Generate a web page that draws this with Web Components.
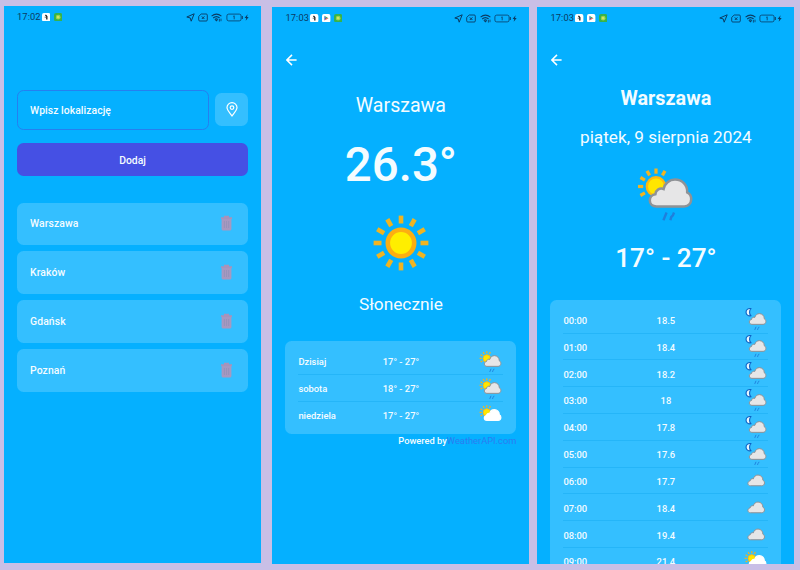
<!DOCTYPE html>
<html lang="pl">
<head>
<meta charset="utf-8">
<title>Pogoda</title>
<style>
html,body{margin:0;height:100%}
body{width:800px;height:570px;overflow:hidden;background:#c9bfe6;font-family:Roboto,"Liberation Sans",sans-serif;color:#f4fcff}
</style>
</head>
<body>
<weather-showcase></weather-showcase>
<script>
const define = (name, html) => customElements.define(name, class extends HTMLElement {
  constructor() { super(); this.attachShadow({ mode: "open" }); }
  connectedCallback() {
    this.shadowRoot.innerHTML = typeof html === "function" ? html(this) : html;
  }
});

/* Weather glyphs, drawn on a 64 unit square */
const CLOUD = "M22.5 43.4C18.5 43.4 15.8 41 15.8 37.6C15.8 34.2 18.2 31.6 21.4 31.2C21.6 27.4 25.4 24.6 29.6 26C30.6 20.4 35.4 16.6 41 16.6C48 16.6 53.6 22 53.2 29.4C56 30.8 57.3 33.4 57.2 36.4C57 40.6 54.4 43.4 50.2 43.4Z";
const rays = (cx, cy, r1, r2, w, angles) => angles.map(a => {
  const t = a * Math.PI / 180, c = Math.cos(t), s = Math.sin(t);
  return `<path d="M${cx + r1 * c} ${cy + r1 * s}L${cx + r2 * c} ${cy + r2 * s}" stroke="#f0b422" stroke-width="${w}"/>`;
}).join("");
const smallSun = rays(22, 23.5, 12.8, 18, 3.2, [150, 180, 210, 240, 270, 300]) +
  `<circle cx="22" cy="23.5" r="9.2" fill="#ffe600" stroke="#fcb813" stroke-width="2.4"/>`;
const greyCloud = `<path d="${CLOUD}" fill="#e6e6e7" stroke="#8f9296" stroke-width="2.5"/>`;
const drops = `<path d="M32.6 49.5L29.4 57.3M40 49.5L38.9 52.4L37.2 54.2L36.4 57.3" fill="none" stroke="#1f7fdc" stroke-width="2.4"/>`;
const moon = `<path d="M20 4C12 2.6 7.4 7.6 7.6 13C7.8 19 13 23.4 20 22C15.2 18 15.2 8 20 4Z" fill="#e8f7ff" stroke="#0c62c4" stroke-width="2.8" stroke-linejoin="round"/>`;
const GLYPHS = {
  sun: rays(32, 32, 19.5, 27.4, 4.6, [...Array(12)].map((_, i) => i * 30)) +
    `<circle cx="32" cy="32" r="13.2" fill="#ffee00" stroke="#fcae12" stroke-width="4.6"/>`,
  "sun-rain": smallSun + greyCloud + drops,
  "sun-cloud": smallSun + `<path d="${CLOUD}" fill="#fff" stroke="#fff" stroke-width="3"/>`,
  "moon-rain": moon + greyCloud + drops,
  cloud: `<g transform="translate(-3.5 1)">${greyCloud}</g>`
};
define("weather-icon", el => `<style>:host{display:block;width:var(--size,25.6px);height:var(--size,25.6px)}svg{display:block;width:100%;height:100%}</style>
<svg viewBox="0 0 64 64">${GLYPHS[el.getAttribute("kind")]}</svg>`);

define("status-bar", el => `<style>
:host{display:flex;align-items:center;height:22px;padding:0 12.4px 0 13px;color:#0b3b63;font-size:9.3px;letter-spacing:.1px;line-height:22px}
.apps{display:flex;gap:3.4px;margin-left:1.4px;flex:1}
svg{display:block}
.right{display:flex;align-items:center;gap:3.3px}
</style>
<span>${el.getAttribute("time")}</span>
<div class="apps">
<svg width="8.4" height="8.4" viewBox="0 0 8 8"><rect width="8" height="8" rx="1.8" fill="#fff"/><path d="M3.3 1.8L4.6 3.3V6.3" fill="none" stroke="#111" stroke-width="1.2"/><path d="M2.5 4H4" stroke="#777" stroke-width="1"/></svg>
${el.hasAttribute("store") ? `<svg width="8.4" height="8.4" viewBox="0 0 8 8"><rect width="8" height="8" rx="1.8" fill="#fff"/><path d="M2.3 1.7V6.3L4 4Z" fill="#3355b8"/><path d="M2.3 1.7L6.2 4H4Z" fill="#33a852"/><path d="M2.3 6.3L6.2 4H4Z" fill="#e8453c"/></svg>` : ""}
<svg width="8.4" height="8.4" viewBox="0 0 8 8"><rect width="8" height="8" rx="2" fill="#37b34a"/><circle cx="4" cy="4" r="1.8" fill="#c9e56a" stroke="#9bd24a"/></svg>
</div>
<div class="right">
<svg width="9" height="9" viewBox="0 0 9 9" fill="none" stroke="currentColor" stroke-linejoin="round"><path d="M.8 4L8.2 .8L5.2 8.2L4.2 4.9Z"/></svg>
<svg width="10" height="9" viewBox="0 0 10 9" fill="none" stroke="currentColor"><path d="M3.2 1H8.2Q9.3 1 9.3 2.1V6.9Q9.3 8 8.2 8H1.8Q.7 8 .7 6.9V3.4Z" stroke-width=".9"/><path d="M3.8 3.4L6.4 6M6.4 3.4L3.8 6"/></svg>
<svg width="11" height="9" viewBox="0 0 11 9" fill="none" stroke="currentColor" stroke-width="1.1"><path d="M.6 3.2Q5.4 -1 10.4 3.2M2.2 5Q5.4 2.2 8.6 5M3.8 6.6Q5.4 5.2 6.8 6.6"/><path d="M5.4 8.6L4 6.9H6.8Z" fill="currentColor" stroke="none"/><path d="M8.4 6V8.6M10 5.6V8.2" stroke-width=".8"/></svg>
<svg width="23" height="9" viewBox="0 0 23 9"><rect x=".9" y="1.1" width="14.2" height="6.8" rx="1.8" fill="none" stroke="currentColor" stroke-width=".8"/><path d="M16.3 3V6" stroke="currentColor"/><path d="M7.3 3.4L8.2 2.8V6.3" fill="none" stroke="currentColor" stroke-width=".8"/><path d="M21.6 1.3L18.6 5H20.2L19.7 7.7L22.7 4H21Z" fill="currentColor"/></svg>
</div>`);

define("phone-screen", el => `<style>
:host{display:flex;flex-direction:column;width:257px;height:557px;overflow:hidden;background:#05b0ff;box-sizing:border-box}
.body{padding:0 13px;display:flex;flex-direction:column;align-items:stretch}
</style>
<status-bar time="${el.getAttribute("time")}" ${el.hasAttribute("store") ? "store" : ""}></status-bar>
<div class="body"><slot></slot></div>`);

define("back-button", `<style>:host{display:flex;height:14px;margin:24px 0 0 .4px}svg{display:block}</style>
<svg width="12" height="14" viewBox="0 0 12 14" fill="none" stroke="#fff" stroke-width="1.5"><path d="M10.6 7H1.2M6 1.9L.9 7L6 12.1"/></svg>`);

define("location-form", `<style>
:host{display:grid;grid-template-columns:192px 33px;justify-content:space-between;align-items:center;row-gap:13px;margin-top:62px;font-size:10.4px;font-weight:500}
.field{box-sizing:border-box;height:39.5px;border:1px solid #257ff0;border-radius:6.5px;padding:0 12px;line-height:39.6px;letter-spacing:.05px}
.pin{height:33px;border-radius:6.5px;background:#34bfff;display:grid;place-items:center}
.add{grid-column:1/3;height:33.5px;line-height:35px;border-radius:6.5px;background:#4550e4;text-align:center}
</style>
<div class="field">Wpisz lokalizację</div>
<div class="pin"><svg width="12" height="15" viewBox="0 0 12 15" fill="none" stroke="#fff" stroke-width="1.2"><path d="M6 14C4.2 11.4 1 8.3 1 5.6A5 4.9 0 0 1 11 5.6C11 8.3 7.8 11.4 6 14Z"/><circle cx="6" cy="5.6" r="1.8"/></svg></div>
<div class="add">Dodaj</div>`);

define("city-row", `<style>
:host{display:flex;align-items:center;justify-content:space-between;height:42.5px;padding:0 14.8px 0 13px;border-radius:6.5px;background:#34bfff;font-size:10.4px;font-weight:500;letter-spacing:.1px}
span{padding-bottom:.6px}
svg{margin-bottom:.8px}
</style>
<span><slot></slot></span>
<svg width="13" height="16" viewBox="0 0 13 16"><path d="M1 2.2H12V4H1ZM4 .7H9V2.4H4Z" fill="#a793bb"/><path d="M1.6 4H11.4V14Q11.4 15.6 9.8 15.6H3.2Q1.6 15.6 1.6 14Z" fill="#a798c0"/><path d="M4.4 6V13M6.5 6V13M8.6 6V13" stroke="#8f90b8" stroke-width=".7"/></svg>`);

define("city-list", `<style>:host{display:flex;flex-direction:column;gap:6.4px;margin-top:26.5px}</style><slot></slot>`);

define("text-line", `<style>:host{display:block;text-align:center;white-space:nowrap}</style><slot></slot>`);

define("forecast-card", `<style>:host{display:block;background:#34bfff;border-radius:6.5px;padding:var(--top,7.6px) 13px 5px}</style><slot></slot>`);

define("forecast-row", el => `<style>
:host{display:grid;grid-template-columns:1fr auto 1fr;align-items:center;height:26.83px;box-sizing:border-box;border-bottom:1px solid #25b5f8;font-size:9.4px;font-weight:500;line-height:26px}
:host(:last-child){border-color:transparent}
span{padding-top:1.2px}
weather-icon{justify-self:end}
</style>
<span>${el.getAttribute("label")}</span><span>${el.getAttribute("value")}</span><weather-icon kind="${el.getAttribute("kind")}"></weather-icon>`);

define("api-credit", `<style>:host{display:flex;justify-content:flex-end;font-size:9.3px;font-weight:500;line-height:14px}a{color:#2b7cf2;font-weight:400}</style><span>Powered by</span><a>WeatherAPI.com</a>`);

const cities = ["Warszawa", "Kraków", "Gdańsk", "Poznań"];
const days = [["Dzisiaj", "17° - 27°", "sun-rain"], ["sobota", "18° - 27°", "sun-rain"], ["niedziela", "17° - 27°", "sun-cloud"]];
const hours = [["00:00", "18.5", "moon-rain"], ["01:00", "18.4", "moon-rain"], ["02:00", "18.2", "moon-rain"], ["03:00", "18", "moon-rain"], ["04:00", "17.8", "moon-rain"], ["05:00", "17.6", "moon-rain"], ["06:00", "17.7", "cloud"], ["07:00", "18.4", "cloud"], ["08:00", "19.4", "cloud"], ["09:00", "21.4", "sun-cloud"]];
const rows = list => list.map(([l, v, k]) => `<forecast-row label="${l}" value="${v}" kind="${k}"></forecast-row>`).join("");

define("weather-showcase", `<style>
:host{display:flex;align-items:flex-start;padding:6px 0 0 4px;width:800px;box-sizing:border-box}
.details{margin:1px 8.1px 0 11.4px}
.day{margin-top:1px;margin-left:-.1px}
.city{font-size:19.6px;line-height:26px;margin-top:25.5px}
.temp{font-size:47.4px;font-weight:500;line-height:60px;margin-top:16px}
.sun{--size:64px;align-self:center;margin-top:16px}
.cond{font-size:17.3px;line-height:24px;margin-top:17px}
.daily{margin-top:25px}
.title{font-size:19.8px;font-weight:700;line-height:26px;margin-top:19px}
.date{font-size:17.2px;line-height:24px;margin-top:12.5px}
.icon{--size:64px;align-self:center;margin-top:14.5px}
.range{font-size:26.2px;font-weight:500;line-height:34px;margin-top:14px}
.hourly{margin-top:25px;--top:6.7px}
</style>
<phone-screen time="17:02"><location-form></location-form><city-list>${cities.map(c => `<city-row>${c}</city-row>`).join("")}</city-list></phone-screen>
<phone-screen class="details" time="17:03" store>
<back-button></back-button>
<text-line class="city">Warszawa</text-line>
<text-line class="temp">26.3°</text-line>
<weather-icon class="sun" kind="sun"></weather-icon>
<text-line class="cond">Słonecznie</text-line>
<forecast-card class="daily">${rows(days)}</forecast-card>
<api-credit></api-credit>
</phone-screen>
<phone-screen class="day" time="17:03" store>
<back-button></back-button>
<text-line class="title">Warszawa</text-line>
<text-line class="date">piątek, 9 sierpnia 2024</text-line>
<weather-icon class="icon" kind="sun-rain"></weather-icon>
<text-line class="range">17° - 27°</text-line>
<forecast-card class="hourly">${rows(hours)}</forecast-card>
</phone-screen>`);
</script>
</body>
</html>
